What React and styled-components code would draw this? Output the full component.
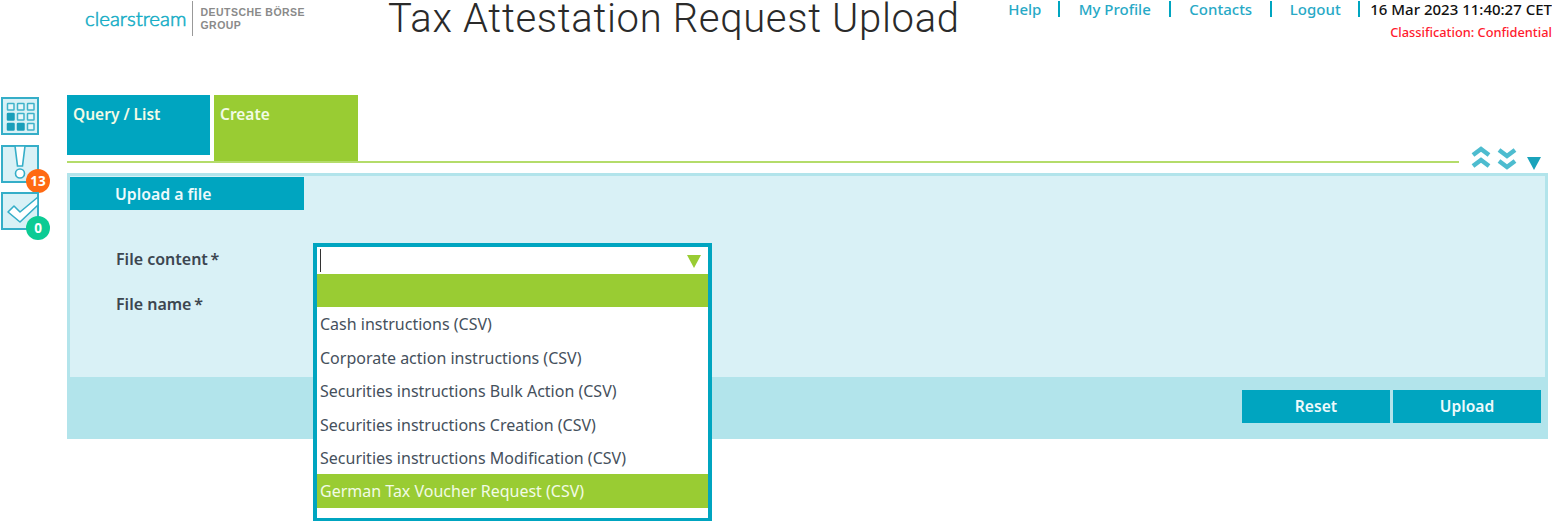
import React from "react";
import styled, { createGlobalStyle } from "styled-components";

const TEAL = "#00a5c0";
const GREEN = "#99cc33";

const GlobalStyle = createGlobalStyle`
  html, body {
    margin: 0;
    padding: 0;
    background: #fff;
    font-family: "Noto Sans", "Open Sans", sans-serif;
    overflow: hidden;
  }
`;

const Page = styled.div`
  width: 1552px;
  height: 521px;
  position: relative;
  overflow: hidden;
`;

const Header = styled.header`
  height: 95px;
  display: flex;
  align-items: flex-start;
`;

const Logo = styled.div`
  flex: none;
  width: 388px;
  padding: 1px 0 0 85px;
  box-sizing: border-box;
  display: flex;
  align-items: flex-start;
`;

const LogoWord = styled.span`
  margin-top: 7px;
  font-family: "Lato", sans-serif;
  font-size: 20.5px;
  font-weight: 300;
  color: #19aec6;
  -webkit-text-stroke: 0.6px #19aec6;
  line-height: 20px;
`;

const LogoDivider = styled.span`
  width: 1px;
  height: 35px;
  margin: 0 7px 0 6px;
  background: #999;
`;

const LogoGroup = styled.span`
  margin-top: 5px;
  font-family: "Liberation Sans", sans-serif;
  font-size: 10.5px;
  font-weight: 700;
  line-height: 13px;
  letter-spacing: 0.47px;
  color: #8a8a8a;
`;

const Title = styled.h1`
  margin: 0;
  flex: none;
  width: 600px;
  font-family: "Roboto", sans-serif;
  font-weight: 300;
  font-size: 40px;
  line-height: 38px;
  letter-spacing: 0.67px;
  color: #2a2a2a;
  white-space: nowrap;
`;

const TopRight = styled.div`
  flex: 1;
  display: flex;
  flex-direction: column;
  align-items: flex-end;
`;

const NavRow = styled.nav`
  display: flex;
  align-items: center;
  height: 18px;
`;

const NavLink = styled.a`
  font-size: 15px;
  font-weight: 500;
  line-height: 18px;
  color: #27a9c6;
  width: ${(p) => p.$width}px;
  box-sizing: border-box;
  border-right: 2px solid ${TEAL};
  height: 16px;
  display: flex;
  align-items: center;
  justify-content: center;
`;

const Clock = styled.span`
  padding-left: 10px;
  font-size: 15px;
  font-weight: 500;
  color: #111;
  white-space: nowrap;
`;

const Classification = styled.div`
  margin-top: 5px;
  font-size: 12.8px;
  font-weight: 500;
  line-height: 18px;
  color: #ff1a2e;
`;

const Body = styled.div`
  display: flex;
`;

const Sidebar = styled.aside`
  width: 67px;
  flex: none;
  padding: 2px 0 0 1px;
  box-sizing: border-box;
  display: flex;
  flex-direction: column;
  gap: 10px;
`;

const SideIcon = styled.div`
  position: relative;
  width: 38px;
  height: 37.5px;
`;

const Badge = styled.span`
  position: absolute;
  left: 25px;
  top: 24px;
  width: 24px;
  height: 24px;
  border-radius: 50%;
  background: ${(p) => p.$color};
  color: #fff;
  font-size: 13.5px;
  font-weight: 700;
  display: flex;
  align-items: center;
  justify-content: center;
`;

const Main = styled.main`
  width: 1481px;
  flex: none;
`;

const TabBar = styled.div`
  display: flex;
  align-items: flex-start;
  height: 78px;
`;

const TabList = styled.div`
  width: 1392px;
  height: 66px;
  display: flex;
  gap: 4px;
  align-items: flex-start;
  border-bottom: 2px solid #b4dc6a;
  flex: none;
`;

const Tab = styled.div`
  width: ${(p) => p.$width}px;
  height: ${(p) => p.$height}px;
  background: ${(p) => p.$color};
  color: #f2fbe6;
  font-size: 15.5px;
  font-weight: 600;
  line-height: 20px;
  padding: 9px 0 0 6px;
  box-sizing: border-box;
`;

const Collapsers = styled.div`
  display: flex;
  align-items: flex-start;
  gap: 6px;
  padding: 50px 0 0 12px;
`;

const ChevronIcon = styled.svg`
  margin-top: ${(p) => (p.$down ? 2 : 0)}px;
`;

const ArrowIcon = styled.svg`
  margin: 12px 0 0 4px;
`;

const Panel = styled.section`
  width: 1481px;
  height: 266px;
  box-sizing: border-box;
  background: #d9f1f6;
  border: 3px solid #b2e4eb;
  border-bottom: 0;
  display: flex;
  flex-direction: column;
`;

const PanelHeading = styled.div`
  width: 234px;
  height: 33px;
  margin-top: 1px;
  background: ${TEAL};
  color: #eefafc;
  font-size: 15.8px;
  font-weight: 600;
  line-height: 35px;
  padding-left: 45px;
  box-sizing: border-box;
`;

const Form = styled.div`
  flex: 1;
  padding: 37px 0 0 46px;
`;

const FormRow = styled.div`
  height: 45px;
  font-size: 16px;
  font-weight: 600;
  line-height: 24px;
  color: #3c4650;
`;

const PanelFooter = styled.div`
  height: 62px;
  margin: 0 -3px;
  background: #b2e4eb;
  display: flex;
  justify-content: flex-end;
  gap: 3px;
  padding: 13px 7px 0 0;
  box-sizing: border-box;
`;

const Button = styled.button`
  width: 148px;
  height: 33px;
  padding: 0 0 1px;
  border: 0;
  background: ${TEAL};
  color: #eefafc;
  font-family: inherit;
  font-size: 15.6px;
  font-weight: 600;
`;

const Dropdown = styled.div`
  position: absolute;
  left: 313px;
  top: 243px;
  width: 399px;
  height: 278px;
  box-sizing: border-box;
  border: 4px solid ${TEAL};
  border-bottom-width: 3px;
  background: #fff;
`;

const DropdownInput = styled.div`
  height: 27px;
  position: relative;
`;

const Caret = styled.span`
  position: absolute;
  left: 3px;
  top: 2px;
  width: 1px;
  height: 23px;
  background: #333;
`;

const DropdownArrow = styled.span`
  position: absolute;
  right: 7px;
  top: 8px;
  width: 0;
  height: 0;
  border-left: 7px solid transparent;
  border-right: 7px solid transparent;
  border-top: 13px solid ${GREEN};
`;

const Option = styled.div`
  height: 33.4px;
  padding-left: 3px;
  font-size: 16px;
  line-height: 34px;
  white-space: nowrap;
  color: ${(p) => (p.$selected ? "#f2fbe6" : "#45505c")};
  background: ${(p) => (p.$selected ? GREEN : "transparent")};
`;

const options = [
  { label: "", selected: true },
  { label: "Cash instructions (CSV)" },
  { label: "Corporate action instructions (CSV)" },
  { label: "Securities instructions Bulk Action (CSV)" },
  { label: "Securities instructions Creation (CSV)" },
  { label: "Securities instructions Modification (CSV)" },
  { label: "German Tax Voucher Request (CSV)", selected: true },
];

const navLinks = [
  { label: "Help", width: 69 },
  { label: "My Profile", width: 111 },
  { label: "Contacts", width: 101 },
  { label: "Logout", width: 88 },
];

function GridIcon() {
  const filled = ["0,1", "0,2", "1,2"];
  const cells = [];
  for (let row = 0; row < 3; row++) {
    for (let col = 0; col < 3; col++) {
      const on = filled.includes(`${col},${row}`);
      cells.push(
        <rect
          key={`${col}-${row}`}
          x={6.5 + col * 10}
          y={6.5 + row * 10}
          width="6.5"
          height="6.5"
          rx="0.5"
          fill={on ? "#1a9fba" : "#e8f7fa"}
          stroke={on ? "#1a9fba" : "#3fb3ca"}
          strokeWidth="1.5"
        />
      );
    }
  }
  return (
    <svg width="38" height="38" viewBox="0 0 38 38">
      <rect x="1" y="1" width="36" height="36" fill="#d9f1f6" stroke="#35aec8" strokeWidth="2" />
      {cells}
    </svg>
  );
}

function AlertIcon() {
  return (
    <svg width="38" height="38" viewBox="0 0 38 38">
      <rect x="1" y="1" width="36" height="36" fill="#d9f1f6" stroke="#35aec8" strokeWidth="2" />
      <path d="M14 1h10l-2.5 20h-5z" fill="#fff" stroke="#35aec8" strokeWidth="1.6" />
      <circle cx="19" cy="28.5" r="4.5" fill="#fff" stroke="#35aec8" strokeWidth="1.6" />
    </svg>
  );
}

function CheckIcon() {
  return (
    <svg width="38" height="38" viewBox="0 0 38 38">
      <rect x="1" y="1" width="36" height="36" fill="#d9f1f6" stroke="#35aec8" strokeWidth="2" />
      <path d="M7 20l6-6 6 6L37 5v8L19 30z" fill="#fff" stroke="#35aec8" strokeWidth="1.6" strokeLinejoin="round" />
    </svg>
  );
}

function DoubleChevron({ down }) {
  return (
    <ChevronIcon $down={down} width="20" height="24" viewBox="0 0 20 24">
      <g fill="none" stroke="#4dbccf" strokeWidth="4.5" transform={down ? "rotate(180 10 12)" : undefined}>
        <path d="M2 10l8-6 8 6" />
        <path d="M2 21l8-6 8 6" />
      </g>
    </ChevronIcon>
  );
}

function SmallArrow() {
  return (
    <ArrowIcon width="14" height="13" viewBox="0 0 14 13">
      <path d="M0 0h14L7 13z" fill="#1aa3bb" />
    </ArrowIcon>
  );
}

export default function App() {
  return (
    <Page>
      <GlobalStyle />
      <Header>
        <Logo>
          <LogoWord>clearstream</LogoWord>
          <LogoDivider />
          <LogoGroup>
            DEUTSCHE BÖRSE
            <br />
            GROUP
          </LogoGroup>
        </Logo>
        <Title>Tax Attestation Request Upload</Title>
        <TopRight>
          <NavRow>
            {navLinks.map((link) => (
              <NavLink key={link.label} $width={link.width}>
                {link.label}
              </NavLink>
            ))}
            <Clock>16 Mar 2023 11:40:27 CET</Clock>
          </NavRow>
          <Classification>Classification: Confidential</Classification>
        </TopRight>
      </Header>
      <Body>
        <Sidebar>
          <SideIcon>
            <GridIcon />
          </SideIcon>
          <SideIcon>
            <AlertIcon />
            <Badge $color="#ff6a13">13</Badge>
          </SideIcon>
          <SideIcon>
            <CheckIcon />
            <Badge $color="#0ccb94">0</Badge>
          </SideIcon>
        </Sidebar>
        <Main>
          <TabBar>
            <TabList>
              <Tab $width={143} $height={60} $color={TEAL}>Query / List</Tab>
              <Tab $width={144} $height={66} $color={GREEN}>Create</Tab>
            </TabList>
            <Collapsers>
              <DoubleChevron />
              <DoubleChevron down />
              <SmallArrow />
            </Collapsers>
          </TabBar>
          <Panel>
            <PanelHeading>Upload a file</PanelHeading>
            <Form>
              <FormRow>File content{"\u2009"}*</FormRow>
              <FormRow>File name{"\u2009"}*</FormRow>
            </Form>
            <PanelFooter>
              <Button>Reset</Button>
              <Button>Upload</Button>
            </PanelFooter>
          </Panel>
        </Main>
      </Body>
      <Dropdown>
        <DropdownInput>
          <Caret />
          <DropdownArrow />
        </DropdownInput>
        {options.map((option, i) => (
          <Option key={i} $selected={option.selected}>
            {option.label}
          </Option>
        ))}
      </Dropdown>
    </Page>
  );
}
